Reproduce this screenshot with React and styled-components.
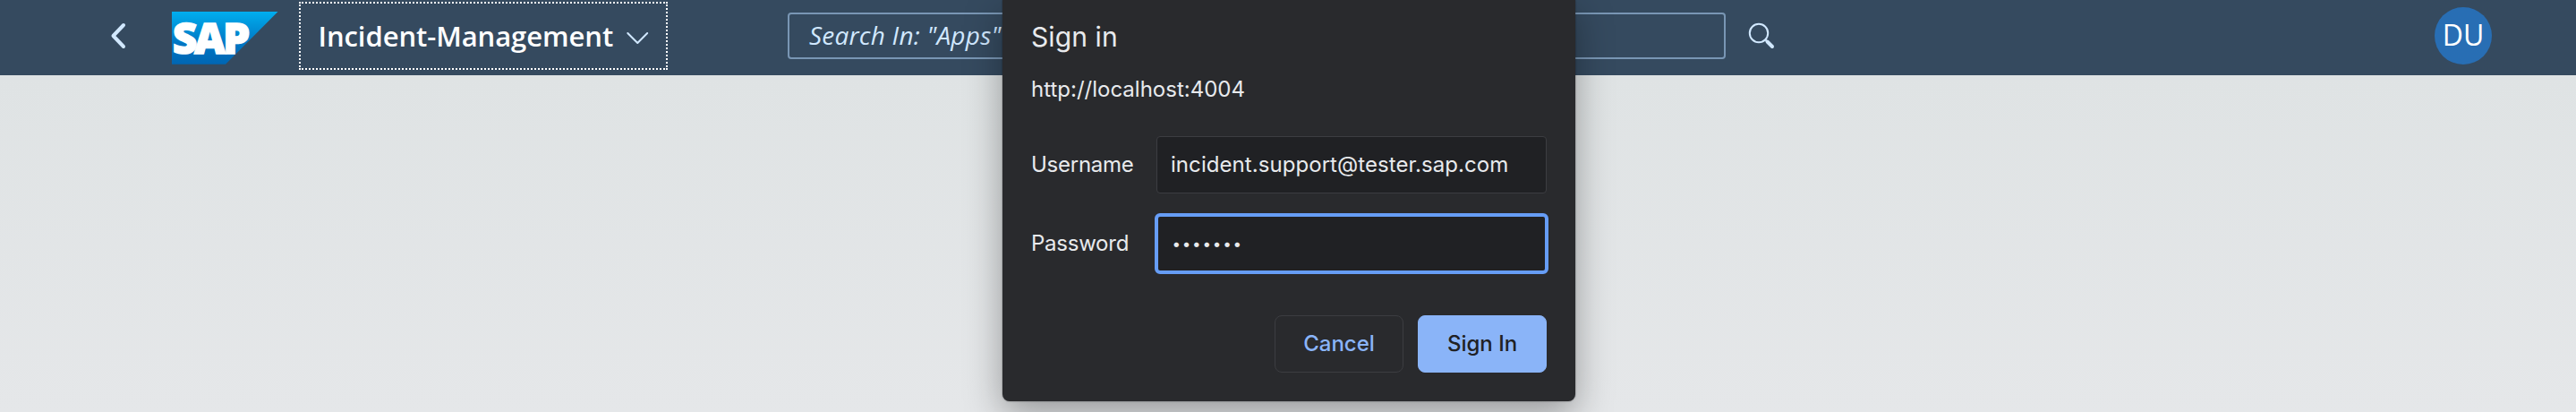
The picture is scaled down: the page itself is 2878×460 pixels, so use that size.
import React from "react";
import styled, { createGlobalStyle } from "styled-components";

const GlobalStyle = createGlobalStyle`
  * { box-sizing: border-box; }
  body { margin: 0; font-family: "Open Sans", "Noto Sans", sans-serif; }
`;

const Page = styled.div`
  position: relative;
  height: 460px;
  overflow: hidden;
  background: linear-gradient(#dfe3e4 84px, #e5e7e9);
`;

const ShellBar = styled.header`
  display: flex;
  align-items: flex-start;
  height: 84px;
  padding: 0 94px 0 124px;
  background: #354a5f;
`;

const BackButton = styled.button`
  display: block;
  width: 17px;
  height: 28px;
  margin: 26px 51px 0 0;
  padding: 0;
  border: 0;
  background: none;
`;

const Icon = styled.svg`
  display: block;
  overflow: visible;
  fill: none;
  stroke: #d1e8ff;
  stroke-width: ${(p) => p.$weight}px;
  stroke-linecap: round;
  stroke-linejoin: round;
`;

const Logo = styled.svg`
  display: block;
  margin: 13px 24px 0 0;
  overflow: visible;

  text {
    font: 800 48px "Open Sans", sans-serif;
    fill: #fff;
    stroke: #fff;
    stroke-width: 1.5px;
  }
`;

const AppTitle = styled.div`
  display: flex;
  align-items: center;
  width: 412px;
  height: 76px;
  margin: 2px 134px 0 0;
  padding: 0 20px 0 19.5px;
  border: 2px dotted #fff;
  color: #fff;
  font-size: 31px;
  font-weight: 600;
  line-height: 42px;
  letter-spacing: -0.07px;

  svg { margin: 4px 0 0 auto; }
`;

const SearchField = styled.div`
  width: 1048px;
  height: 52px;
  margin: 14px 27px 0 0;
  padding-left: 22px;
  border: 2px solid #7996b4;
  border-radius: 4px;
  color: #d1e8ff;
  font-size: 28px;
  font-style: italic;
  line-height: 47px;
  letter-spacing: 0.22px;
`;

const SearchButton = styled.div`
  margin-top: 26px;
`;

const Avatar = styled.div`
  width: 64px;
  height: 64px;
  margin: 8px 0 0 auto;
  border-radius: 50%;
  background: #286eb4;
  color: #fff;
  font-size: 32px;
  line-height: 62px;
  text-align: center;
`;

const Dialog = styled.section`
  position: absolute;
  top: 0;
  left: 1120px;
  width: 640px;
  height: 448px;
  padding: 20px 32px 0;
  border-radius: 0 0 8px 8px;
  background: #292a2d;
  box-shadow: 0 0 2px rgba(0, 0, 0, 0.45), 0 14px 42px rgba(0, 0, 0, 0.34);
  color: #e8eaed;
  font: 24px/32px Inter, sans-serif;
`;

const Heading = styled.h1`
  margin: 0;
  font-size: 30px;
  font-weight: 400;
  line-height: 42px;
  letter-spacing: 0.1px;
`;

const Origin = styled.p`
  margin: 22px 0 36px;
  line-height: 32px;
`;

const Fields = styled.div`
  display: grid;
  grid-template-columns: 140px 436px;
  row-gap: 24px;
  align-items: center;
`;

const Label = styled.span`
  letter-spacing: -0.25px;
`;

const Field = styled.div`
  display: flex;
  align-items: center;
  height: 64px;
  padding-left: 15px;
  border: 1px solid #3c3d41;
  border-radius: 4px;
  background: #202124;
  letter-spacing: 0.06px;
`;

const PasswordField = styled(Field)`
  height: 68px;
  margin: -2px;
  padding-left: 15.4px;
  border: 4px solid #669df6;
  border-radius: 6px;
  font-size: 17px;
  letter-spacing: 1.8px;
`;

const Actions = styled.div`
  display: flex;
  justify-content: flex-end;
  gap: 16px;
  margin-top: 48px;
`;

const Button = styled.button`
  width: 144px;
  height: 64px;
  padding: 0;
  border: 1px solid ${(p) => (p.$primary ? "#8ab4f8" : "#3c3d41")};
  border-radius: 8px;
  background: ${(p) => (p.$primary ? "#8ab4f8" : "transparent")};
  color: ${(p) => (p.$primary ? "#202124" : "#8ab4f8")};
  font: 500 24px/32px Inter, sans-serif;
`;

export default function App() {
  return (
    <Page>
      <GlobalStyle />
      <ShellBar>
        <BackButton aria-label="Back">
          <Icon $weight={4} width="17" height="28" viewBox="0 0 17 28">
            <path d="M14 2 2.5 14 14 26" />
          </Icon>
        </BackButton>
        <Logo width="118" height="59" viewBox="0 0 118 59">
          <defs>
            <linearGradient id="logoBlue" x1="0" y1="0" x2="0" y2="1">
              <stop offset="0" stopColor="#00aeef" />
              <stop offset="0.25" stopColor="#0097dc" />
              <stop offset="0.6" stopColor="#0077c4" />
              <stop offset="1" stopColor="#0066b3" />
            </linearGradient>
          </defs>
          <path d="M0 0H118.5L60 58.7H0Z" fill="url(#logoBlue)" />
          <text y="46.5">
            <tspan x="0.8">S</tspan>
            <tspan x="25">A</tspan>
            <tspan x="57">P</tspan>
          </text>
        </Logo>
        <AppTitle>
          Incident-Management
          <Icon $weight={2} width="24" height="13" viewBox="0 0 24 13">
            <path d="M1.3 1 12.3 12 23.2 1" />
          </Icon>
        </AppTitle>
        <SearchField>Search In: "Apps"</SearchField>
        <SearchButton>
          <Icon $weight={2} width="28" height="28" viewBox="0 0 28 28">
            <circle cx="10" cy="11" r="10.2" />
            <path d="m17.5 18.5 1.5 1.5" />
            <path d="m19.5 20.5 5.5 5.5" strokeWidth="4" />
          </Icon>
        </SearchButton>
        <Avatar>DU</Avatar>
      </ShellBar>
      <Dialog>
        <Heading>Sign in</Heading>
        <Origin>http://localhost:4004</Origin>
        <Fields>
          <Label>Username</Label>
          <Field>incident.support@tester.sap.com</Field>
          <Label>Password</Label>
          <PasswordField>•••••••</PasswordField>
        </Fields>
        <Actions>
          <Button>Cancel</Button>
          <Button $primary>Sign In</Button>
        </Actions>
      </Dialog>
    </Page>
  );
}
